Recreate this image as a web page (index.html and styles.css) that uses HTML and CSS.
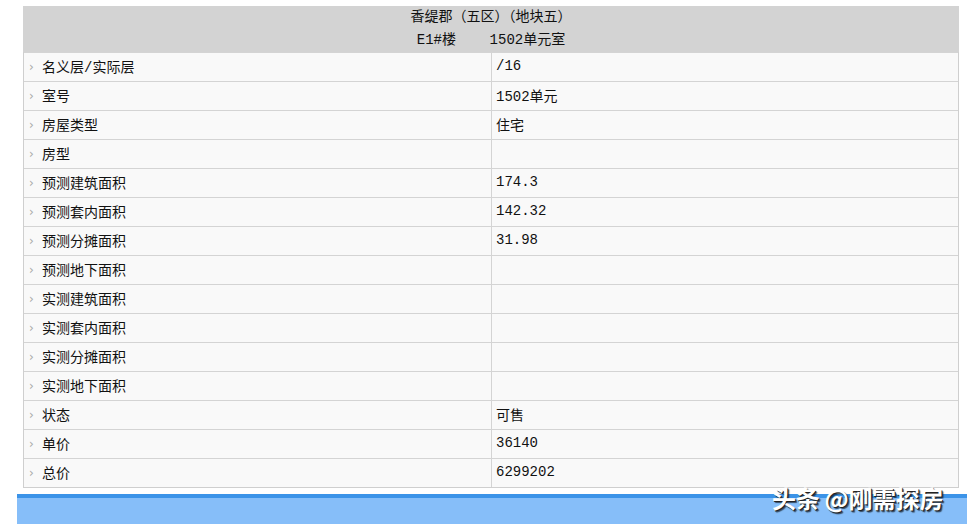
FILE: index.html
```html
<!DOCTYPE html>
<html lang="zh-CN">
<head>
<meta charset="utf-8">
<title>房屋信息</title>
<link rel="stylesheet" href="styles.css">
</head>
<body>
<div class="page">
  <div class="info">
    <div class="head">
      <div class="head-line">香缇郡（五区）（地块五）</div>
      <div class="head-line">E1#楼&nbsp;&nbsp;&nbsp;&nbsp;1502单元室</div>
    </div>
    <div class="row"><div class="label"><span class="arr">›</span>名义层/实际层</div><div class="val">/16</div></div>
    <div class="row"><div class="label"><span class="arr">›</span>室号</div><div class="val">1502单元</div></div>
    <div class="row"><div class="label"><span class="arr">›</span>房屋类型</div><div class="val">住宅</div></div>
    <div class="row"><div class="label"><span class="arr">›</span>房型</div><div class="val"></div></div>
    <div class="row"><div class="label"><span class="arr">›</span>预测建筑面积</div><div class="val">174.3</div></div>
    <div class="row"><div class="label"><span class="arr">›</span>预测套内面积</div><div class="val">142.32</div></div>
    <div class="row"><div class="label"><span class="arr">›</span>预测分摊面积</div><div class="val">31.98</div></div>
    <div class="row"><div class="label"><span class="arr">›</span>预测地下面积</div><div class="val"></div></div>
    <div class="row"><div class="label"><span class="arr">›</span>实测建筑面积</div><div class="val"></div></div>
    <div class="row"><div class="label"><span class="arr">›</span>实测套内面积</div><div class="val"></div></div>
    <div class="row"><div class="label"><span class="arr">›</span>实测分摊面积</div><div class="val"></div></div>
    <div class="row"><div class="label"><span class="arr">›</span>实测地下面积</div><div class="val"></div></div>
    <div class="row"><div class="label"><span class="arr">›</span>状态</div><div class="val">可售</div></div>
    <div class="row"><div class="label"><span class="arr">›</span>单价</div><div class="val">36140</div></div>
    <div class="row"><div class="label"><span class="arr">›</span>总价</div><div class="val">6299202</div></div>
  </div>
  <div class="footer-bar"></div>
  <div class="watermark">头条 @刚需探房</div>
</div>
</body>
</html>
```
FILE: styles.css
```css
* { box-sizing: border-box; }
html, body {
  margin: 0;
  padding: 0;
  background: #ffffff;
  height: 524px;
  overflow: hidden;
}
body {
  font-family: "Liberation Mono", "Noto Sans CJK SC", monospace;
  font-size: 14px;
  color: #111;
}
.page {
  position: relative;
  padding-top: 6px;
  height: 524px;
}
.info {
  margin-left: 23px;
  width: 936px;
  border-left: 1px solid #cfcfcf;
  border-right: 1px solid #cfcfcf;
  border-bottom: 1px solid #cfcfcf;
}
.head {
  background: #d3d3d3;
  height: 46px;
  display: flex;
  flex-direction: column;
  align-items: center;
  justify-content: center;
  margin-left: -1px;
  margin-right: -1px;
  line-height: 23px;
  padding-bottom: 1px;
}
.head-line { white-space: pre; }
.row {
  display: flex;
  height: 29px;
  background: #f9f9f9;
  border-top: 1px solid #d4d4d4;
}
.row:first-of-type { border-top: none; height: 28px; }
.label {
  width: 467px;
  display: flex;
  align-items: center;
  padding-left: 5px;
  padding-bottom: 3px;
}
.arr {
  color: #a8a8a8;
  font-size: 12px;
  width: 13px;
  padding-top: 2px;
  font-family: "DejaVu Sans", sans-serif;
}
.val {
  flex: 1;
  border-left: 1px solid #d4d4d4;
  display: flex;
  align-items: center;
  padding-left: 4px;
  padding-bottom: 3px;
}
.footer-bar {
  margin-top: 6px;
  margin-left: 17px;
  height: 40px;
  background: #86bef9;
  border-top: 4px solid #3b93e8;
}
.watermark {
  position: absolute;
  left: 772px;
  top: 480px;
  font-family: "Noto Sans CJK SC", sans-serif;
  font-size: 24px;
  font-weight: 700;
  color: #ffffff;
  letter-spacing: -0.3px;
  text-shadow: 1px 1px 0 #222, 2px 2px 1px rgba(0,0,0,0.6);
}
```
